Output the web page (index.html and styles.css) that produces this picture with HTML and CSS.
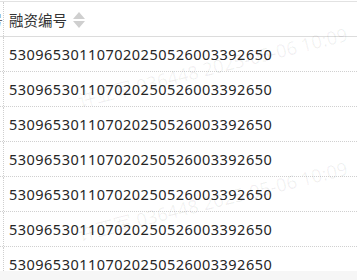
FILE: index.html
```html
<!DOCTYPE html>
<html lang="zh-CN">
<head>
<meta charset="utf-8">
<title>融资编号</title>
<link rel="stylesheet" href="styles.css">
</head>
<body>
<div class="page">
  <div class="viewport">
    <div class="table">
      <div class="row head">
        <div class="prev"><span class="prev-text">号</span></div>
        <div class="cell">
          <span class="title">融资编号</span>
          <span class="sorter">
            <svg width="12" height="16" viewBox="0 0 12 16"><path d="M6 0 L12 7 L0 7 Z" fill="#cfcfcf"/><path d="M0 9 L12 9 L6 16 Z" fill="#cfcfcf"/></svg>
          </span>
        </div>
      </div>
      <div class="row"><div class="prev"></div><div class="cell num">530965301107020250526003392650</div></div>
      <div class="row"><div class="prev"></div><div class="cell num">530965301107020250526003392650</div></div>
      <div class="row"><div class="prev"></div><div class="cell num">530965301107020250526003392650</div></div>
      <div class="row"><div class="prev"></div><div class="cell num">530965301107020250526003392650</div></div>
      <div class="row"><div class="prev"></div><div class="cell num">530965301107020250526003392650</div></div>
      <div class="row"><div class="prev"></div><div class="cell num">530965301107020250526003392650</div></div>
      <div class="row"><div class="prev"></div><div class="cell num">530965301107020250526003392650</div></div>
    </div>
  </div>
  <div class="scrollbar"></div>
  <div class="watermark wm1">许亚军 036448 2025-05-06 10:09</div>
  <div class="watermark wm2">许亚军 036448 2025-05-06 10:09</div>
</div>
</body>
</html>
```
FILE: styles.css
```css
html, body {
  margin: 0;
  padding: 0;
  background: #fff;
}
body {
  font-family: "Noto Sans", "Noto Sans CJK SC", sans-serif;
  color: #333;
}
.page {
  position: relative;
  width: 357px;
  height: 280px;
  overflow: hidden;
}
.viewport {
  overflow: hidden;
  padding-top: 1px;
  box-sizing: border-box;
  height: 271px;
}
.table {
  border-top: 1px solid #e2e2e2;
}
.row {
  display: flex;
  height: 35px;
  border-bottom: 1px dotted #d0d0d0;
  box-sizing: border-box;
}
.row.head {
  height: 35px;
  border-bottom: 1px solid #dcdcdc;
}
.prev {
  width: 3px;
  flex: none;
  border-right: 1px dotted #cfcfcf;
  overflow: hidden;
  display: flex;
  align-items: center;
  justify-content: flex-end;
}
.prev-text {
  font-size: 14.5px;
  color: #666;
  white-space: nowrap;
}
.cell {
  flex: 1;
  display: flex;
  align-items: center;
  padding-left: 5px;
  font-size: 14.5px;
  white-space: nowrap;
}
.num {
  letter-spacing: 0.48px;
  color: #262626;
}
.title {
  color: #333;
}
.sorter {
  display: flex;
  margin-left: 6px;
  margin-top: 1px;
}
.scrollbar {
  height: 9px;
  background: #f6f6f6;
}
.watermark {
  position: absolute;
  left: 78px;
  font-size: 18.5px;
  line-height: 20px;
  white-space: nowrap;
  color: rgba(0, 0, 0, 0.06);
  transform-origin: left center;
  transform: rotate(-14deg);
  pointer-events: none;
}
.wm1 { top: 91px; }
.wm2 { top: 225px; }
```
